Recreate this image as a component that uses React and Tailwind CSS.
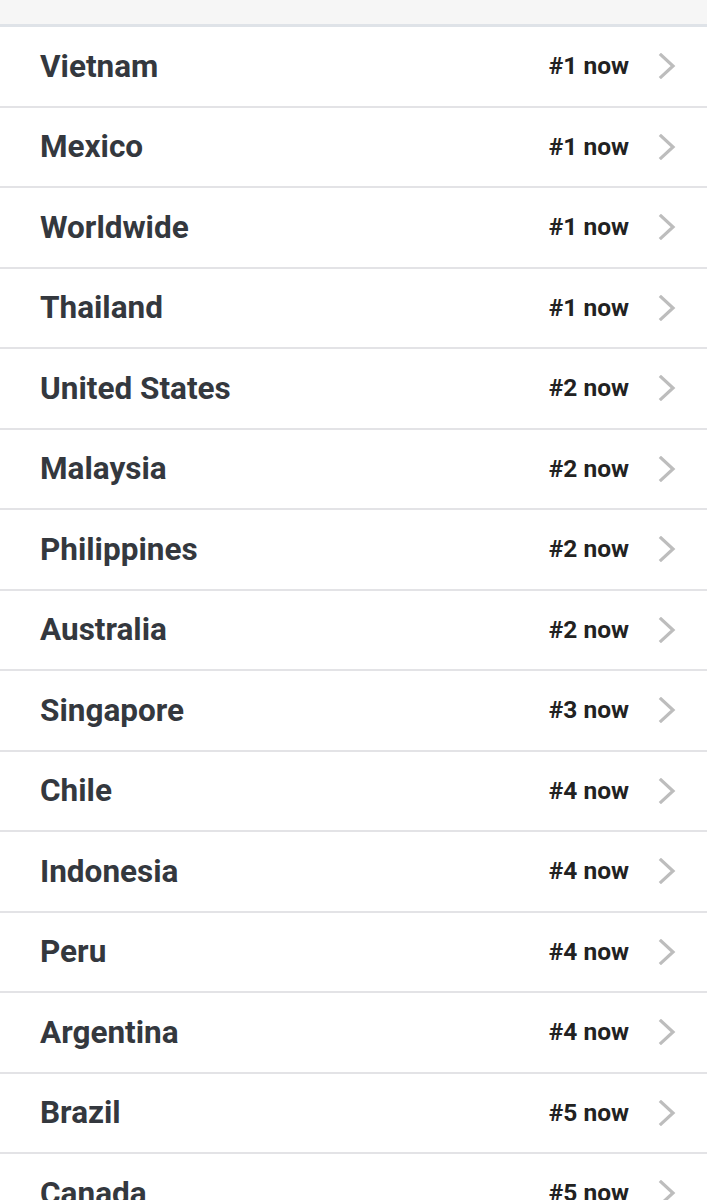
const rows = [
  ["Vietnam", 1],
  ["Mexico", 1],
  ["Worldwide", 1],
  ["Thailand", 1],
  ["United States", 2],
  ["Malaysia", 2],
  ["Philippines", 2],
  ["Australia", 2],
  ["Singapore", 3],
  ["Chile", 4],
  ["Indonesia", 4],
  ["Peru", 4],
  ["Argentina", 4],
  ["Brazil", 5],
  ["Canada", 5],
]

function Chevron() {
  return (
    <svg className="w-[20px] h-[26px] text-[#bdbdbd]" viewBox="0 0 20 26" fill="none" stroke="currentColor">
      <path d="M4 2l12 11L4 24" strokeWidth={3.2} strokeLinecap="square" strokeLinejoin="miter" />
    </svg>
  )
}

export default function App() {
  return (
    <main className="w-[707px] h-[1200px] overflow-hidden bg-white font-['Roboto',sans-serif]">
      <div className="h-[27px] bg-[#f6f6f6] border-b-[3px] border-[#dfe3e8]" />
      <ul>
        {rows.map(([name, rank]) => (
          <li
            key={name}
            className="h-[80.5px] border-b-2 border-[#e3e3e6] flex items-center pl-[40px] pr-[30px]"
          >
            <span className="flex-1 text-[31.5px] font-bold text-[#34383e] leading-none">{name}</span>
            <span className="text-[24.5px] font-bold text-[#222] mr-[28px] leading-none">#{rank} now</span>
            <Chevron />
          </li>
        ))}
      </ul>
    </main>
  )
}
